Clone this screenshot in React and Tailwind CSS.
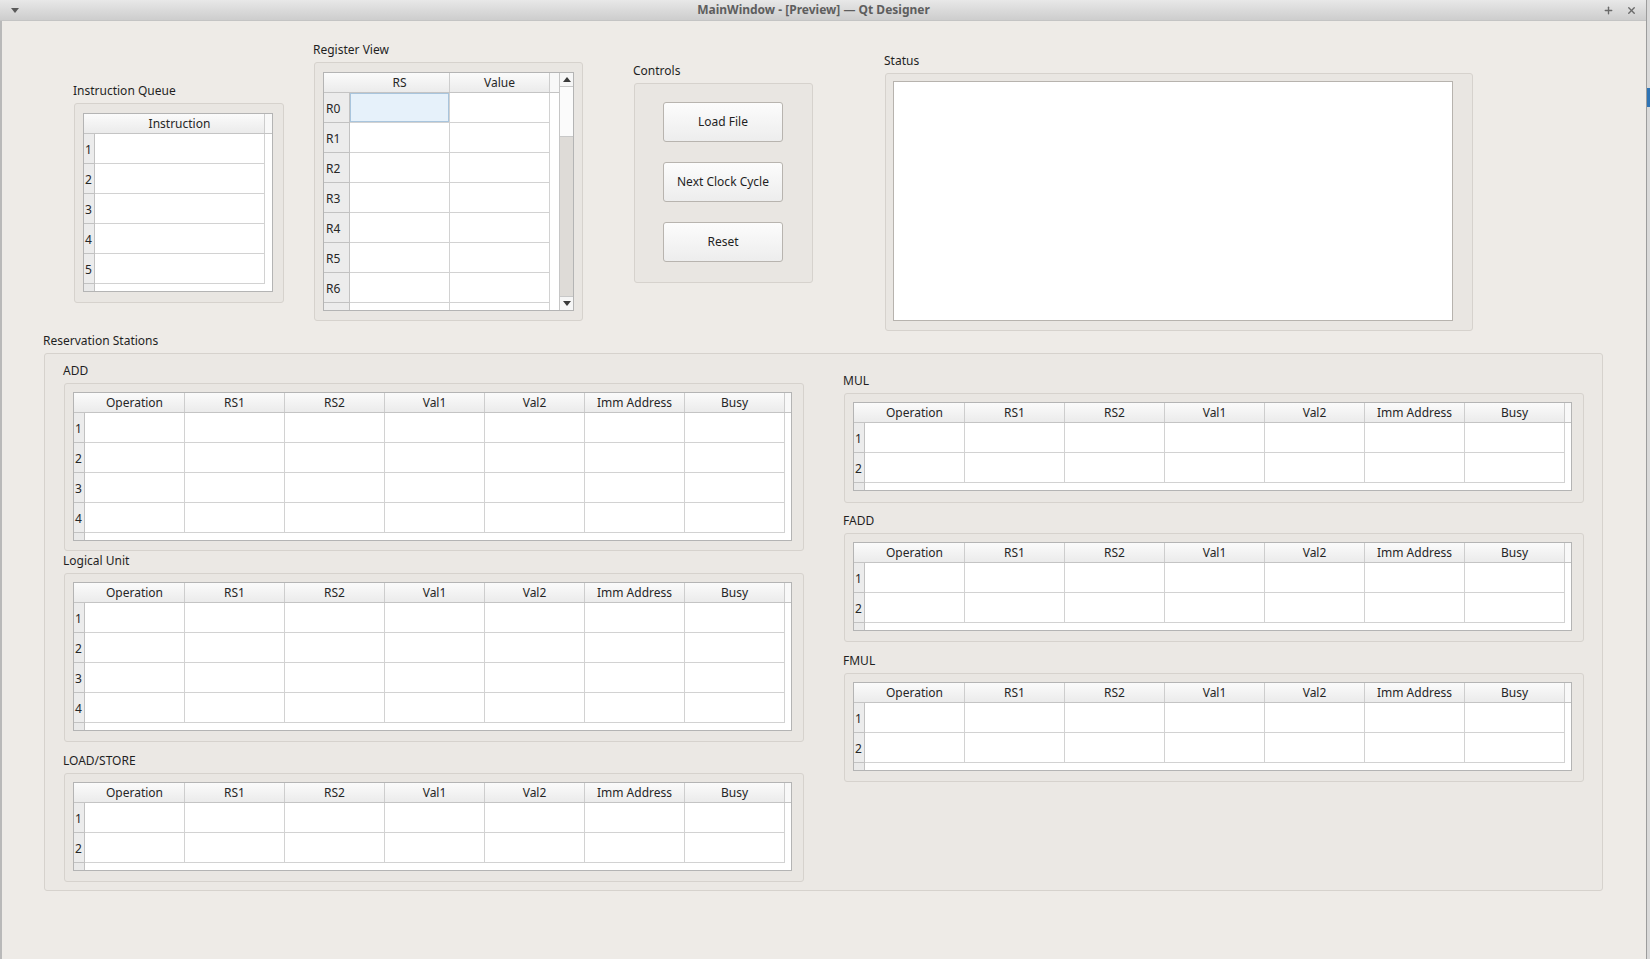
import { Plus, X } from "lucide-react";

const RS_COLS = ["Operation", "RS1", "RS2", "Val1", "Val2", "Imm Address", "Busy"];

const Caption = ({ children }) => (
  <div className="-ml-px h-[16px] mb-[4px] text-[12px] leading-[16px] text-[#1f1f1f] whitespace-nowrap">
    {children}
  </div>
);

const Table = ({ headers, rows, rh = "w-[11px]", col = "w-[100px]", tail = "w-[6px]" }) => (
  <div className="border border-[#b4b4b4] bg-white w-fit">
    <div className="flex h-[20px] border-b border-[#c4c4c4]">
      <div className={`${rh} shrink-0 bg-gradient-to-b from-[#fbfbfb] to-[#ebebeb]`} />
      {headers.map((h) => (
        <div
          key={h}
          className={`${col} shrink-0 flex items-center justify-center border-r border-[#cdcdcd] bg-gradient-to-b from-[#fbfbfb] to-[#ebebeb] text-[12px] text-[#262626]`}
        >
          {h}
        </div>
      ))}
      <div className={`${tail} shrink-0 bg-[#f8f8f8]`} />
    </div>
    {rows.map((r) => (
      <div key={r} className="flex h-[30px]">
        <div className={`${rh} shrink-0 flex items-center pl-[1px] pt-[2px] border-r border-b border-[#c2c2c2] bg-[#ececec] text-[12px] text-[#262626]`}>
          {r}
        </div>
        {headers.map((h) => (
          <div key={h} className={`${col} shrink-0 border-r border-b border-[#d2d2d2]`} />
        ))}
        <div className={`${tail} shrink-0`} />
      </div>
    ))}
    <div className="flex h-[7px]">
      <div className={`${rh} shrink-0 bg-[#e9e9e9] border-r border-[#c2c2c2]`} />
    </div>
  </div>
);

const RegisterTable = () => (
  <div className="flex w-[251px] h-[239px] border border-[#b4b4b4] bg-white">
    <div className="flex-1 flex flex-col overflow-hidden">
      <div className="flex h-[20px] shrink-0 border-b border-[#c4c4c4]">
        <div className="w-[26px] shrink-0 bg-gradient-to-b from-[#fbfbfb] to-[#ebebeb]" />
        {["RS", "Value"].map((h) => (
          <div
            key={h}
            className="w-[100px] shrink-0 flex items-center justify-center border-r border-[#cdcdcd] bg-gradient-to-b from-[#fbfbfb] to-[#ebebeb] text-[12px] text-[#262626]"
          >
            {h}
          </div>
        ))}
        <div className="flex-1 bg-[#f8f8f8]" />
      </div>
      <div className="flex-1 overflow-hidden">
        {["R0", "R1", "R2", "R3", "R4", "R5", "R6", ""].map((r, i) => (
          <div key={i} className="flex h-[30px]">
            <div className="w-[26px] shrink-0 flex items-center pl-[2px] pt-[2px] border-r border-b border-[#c2c2c2] bg-[#ececec] text-[12px] text-[#262626]">
              {r}
            </div>
            <div
              className={`w-[100px] shrink-0 border-r border-b border-[#d2d2d2] ${
                i === 0 ? "bg-[#e6f1fa] shadow-[inset_0_0_0_1px_#a9c5dd]" : ""
              }`}
            />
            <div className="w-[100px] shrink-0 border-r border-b border-[#d2d2d2]" />
          </div>
        ))}
      </div>
    </div>
    {/* scrollbar */}
    <div className="w-[14px] shrink-0 flex flex-col border-l border-[#c6c6c6] bg-[#dedbd7]">
      <div className="h-[14px] flex items-center justify-center bg-[#f6f6f6] border-b border-[#c8c8c8]">
        <div className="w-0 h-0 border-l-[4px] border-r-[4px] border-b-[5px] border-l-transparent border-r-transparent border-b-[#3a3a3a]" />
      </div>
      <div className="h-[50px] bg-[#fbfbfb] border-b border-[#c8c8c8]" />
      <div className="flex-1" />
      <div className="h-[14px] flex items-center justify-center bg-[#f6f6f6] border-t border-[#c8c8c8]">
        <div className="w-0 h-0 border-l-[4px] border-r-[4px] border-t-[5px] border-l-transparent border-r-transparent border-t-[#3a3a3a]" />
      </div>
    </div>
  </div>
);

const Button = ({ children }) => (
  <button className="w-[120px] h-[40px] rounded-[3px] border border-[#b8b4af] bg-gradient-to-b from-[#fcfcfc] to-[#ededed] text-[12px] text-[#1f1f1f]">
    {children}
  </button>
);

const Station = ({ title, rows, h }) => (
  <div>
    <Caption>{title}</Caption>
    <div className={`${h} w-[740px] rounded-[3px] border border-[#d6d2cd] bg-[#e9e6e2] pl-[8px] pt-[8px]`}>
      <Table headers={RS_COLS} rows={rows} />
    </div>
  </div>
);

export default function App() {
  return (
    <div className="flex w-[1650px] h-[959px] overflow-hidden font-['Noto_Sans',sans-serif] bg-[#eeebe7]">
      <div className="w-[1646px] flex flex-col">
        {/* title bar */}
        <div className="h-[21px] shrink-0 flex items-center bg-gradient-to-b from-[#e8e8e8] to-[#cdcdcd] border-b border-[#c4c4c4]">
          <div className="w-[30px] flex justify-center">
            <div className="w-0 h-0 border-l-[4px] border-r-[4px] border-t-[5px] border-l-transparent border-r-transparent border-t-[#5a5a5a]" />
          </div>
          <div className="flex-1 flex justify-center pr-[6px] text-[12px] font-bold text-[#5e5e5e]">
            MainWindow - [Preview] — Qt Designer
          </div>
          <div className="flex items-center gap-[12px] pr-[9px] text-[#6a6a6a]">
            <Plus className="w-[11px] h-[11px]" strokeWidth={3} />
            <X className="w-[11px] h-[11px]" strokeWidth={3} />
          </div>
        </div>

        <div className="flex-1 border-l-2 border-[#b9b9b9]">
          {/* top row */}
          <div className="flex items-start pl-[72px]">
            <div className="mt-[62px]">
              <Caption>Instruction Queue</Caption>
              <div className="w-[210px] h-[200px] rounded-[3px] border border-[#d6d2cd] bg-[#e9e6e2] pl-[8px] pt-[9px]">
                <Table headers={["Instruction"]} rows={["1", "2", "3", "4", "5"]} col="w-[170px]" tail="w-[7px]" />
              </div>
            </div>

            <div className="ml-[30px] mt-[21px]">
              <Caption>Register View</Caption>
              <div className="w-[269px] h-[259px] rounded-[3px] border border-[#d6d2cd] bg-[#e9e6e2] pl-[8px] pt-[9px]">
                <RegisterTable />
              </div>
            </div>

            <div className="ml-[51px] mt-[42px]">
              <Caption>Controls</Caption>
              <div className="w-[179px] h-[200px] rounded-[3px] border border-[#d6d2cd] bg-[#e9e6e2] pl-[28px] pt-[18px] flex flex-col gap-[20px]">
                <Button>Load File</Button>
                <Button>Next Clock Cycle</Button>
                <Button>Reset</Button>
              </div>
            </div>

            <div className="ml-[72px] mt-[32px]">
              <Caption>Status</Caption>
              <div className="w-[588px] h-[258px] rounded-[3px] border border-[#d6d2cd] bg-[#e9e6e2] pl-[7px] pt-[7px]">
                <div className="w-[560px] h-[240px] bg-white border border-[#b7b3ae]" />
              </div>
            </div>
          </div>

          {/* reservation stations */}
          <div className="ml-[42px] mt-[2px]">
            <Caption>Reservation Stations</Caption>
            <div className="w-[1559px] h-[538px] rounded-[3px] border border-[#d6d2cd] bg-[#ebe8e4] flex items-start">
              <div className="ml-[19px] mt-[9px] flex flex-col">
                <Station title="ADD" rows={["1", "2", "3", "4"]} h="h-[168px]" />
                <div className="mt-[2px]">
                  <Station title="Logical Unit" rows={["1", "2", "3", "4"]} h="h-[169px]" />
                </div>
                <div className="mt-[11px]">
                  <Station title="LOAD/STORE" rows={["1", "2"]} h="h-[109px]" />
                </div>
              </div>
              <div className="ml-[40px] mt-[19px] flex flex-col">
                <Station title="MUL" rows={["1", "2"]} h="h-[110px]" />
                <div className="mt-[10px]">
                  <Station title="FADD" rows={["1", "2"]} h="h-[109px]" />
                </div>
                <div className="mt-[11px]">
                  <Station title="FMUL" rows={["1", "2"]} h="h-[109px]" />
                </div>
              </div>
            </div>
          </div>
        </div>
      </div>

      {/* desktop sliver beyond the window edge */}
      <div className="w-[4px] flex flex-col border-l border-[#9c9c9c] bg-[#d9d9d9]">
        <div className="h-[88px]" />
        <div className="h-[19px] bg-[#2f74b5]" />
      </div>
    </div>
  );
}
